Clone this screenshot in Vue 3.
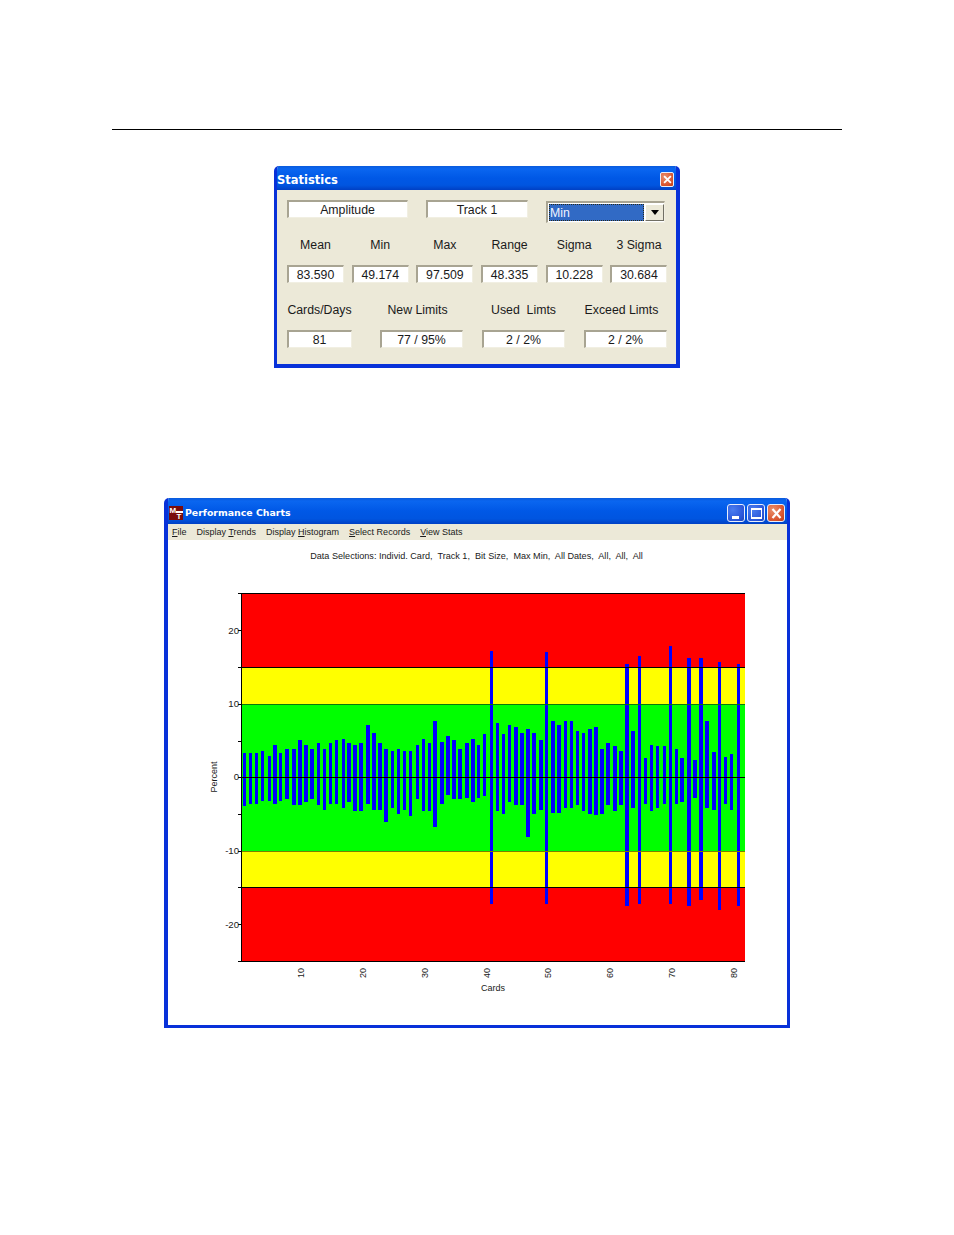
<script setup>
const row2 = [
  { label: 'Mean', value: '83.590' },
  { label: 'Min', value: '49.174' },
  { label: 'Max', value: '97.509' },
  { label: 'Range', value: '48.335' },
  { label: 'Sigma', value: '10.228' },
  { label: '3 Sigma', value: '30.684' },
]
const row3 = [
  { label: 'Cards/Days', value: '81', shift: false },
  { label: 'New Limits', value: '77 / 95%', shift: true },
  { label: 'Used  Limts', value: '2 / 2%', shift: false },
  { label: 'Exceed Limts', value: '2 / 2%', shift: true },
]
const menus = [
  { key: 'F', rest: 'ile' },
  { pre: 'Display ', key: 'T', rest: 'rends' },
  { pre: 'Display ', key: 'H', rest: 'istogram' },
  { key: 'S', rest: 'elect Records' },
  { key: 'V', rest: 'iew Stats' },
]

// Measured bar extents: [left, right, top, bottom]
const partA = [
  [128,138,160,318],[147,156,160,312],[165,174,160,312],[183,192,154,303],[203,213,168,303],
  [220,231,136,312],[238,248,160,303],[255,267,148,297],[276,288,148,315],[294,305,120,315],
  [312,323,136,306],[330,341,148,297],[351,360,130,315],[369,378,148,330],[387,396,130,312],
  [405,414,120,312],[426,435,118,324],[442,453,130,306],[460,471,136,333],[478,489,130,333],
  [498,510,75,312],[516,528,100,330],[534,546,130,330],[552,563,148,365],[573,582,154,324],
  [591,600,148,342],[609,618,154,330],[627,636,154,347],[648,657,136,297],[666,675,118,333],
  [684,693,130,333],[700,711,64,381],[720,732,127,312],[738,750,109,285],[756,768,120,297],
  [774,786,148,297],[795,806,130,294],[813,824,118,306],[831,840,136,294],
]
const partB = [
  [9,18,282,48],[30,39,33,372],[48,57,249,93],[66,75,282,102],[84,93,255,66],
  [102,114,261,75],[120,132,279,75],[138,150,267,171],[156,168,279,102],[177,189,300,90],
  [195,205,36,372],[213,225,243,99],[231,243,255,99],[252,261,243,84],[270,279,243,84],
  [288,297,273,75],[306,315,279,93],[324,336,267,102],[342,354,261,106],[360,372,327,102],
  [379,390,309,75],[399,411,318,93],[417,429,333,75],[435,447,72,378],[453,465,273,84],
  [474,483,48,372],[491,501,354,72],[510,519,315,93],[528,537,318,84],[549,558,318,72],
  [567,576,18,372],[585,594,327,72],[601,612,354,66],[621,633,54,378],[639,651,360,54],
  [657,669,54,360],[675,687,243,84],[696,708,336,90],[714,724,66,390],[732,741,351,72],
  [750,759,342,90],[771,780,72,378],
]
const toBar = (x0, t0, b0) => ([l, r, t, b]) => {
  const x = Math.round(x0 + l / 3)
  const y = Math.round(t0 + t / 3)
  return { x, y, w: Math.max(3, Math.round((r - l) / 3)), h: Math.round(b0 + b / 3) - y }
}
const bars = [...partA.map(toBar(200, 700, 700)), ...partB.map(toBar(480, 640, 780))]

const bands = [
  { y: 593, h: 74, fill: '#ff0000' },
  { y: 667, h: 37, fill: '#ffff00' },
  { y: 704, h: 147, fill: '#00ff00' },
  { y: 851, h: 36, fill: '#ffff00' },
  { y: 887, h: 74, fill: '#ff0000' },
]
const ticks = [593, 630, 667, 704, 741, 777, 814, 851, 887, 924, 961]
const yLabels = [
  { y: 631, t: '20' }, { y: 704, t: '10' }, { y: 777, t: '0' },
  { y: 851, t: '-10' }, { y: 925, t: '-20' },
]
const xLabels = [
  { x: 300, t: '10' }, { x: 362, t: '20' }, { x: 424, t: '30' }, { x: 486, t: '40' },
  { x: 547, t: '50' }, { x: 609, t: '60' }, { x: 671, t: '70' }, { x: 733, t: '80' },
]
const dataTitle = 'Data Selections: Individ. Card,  Track 1,  Bit Size,  Max Min,  All Dates,  All,  All,  All'
</script>

<template>
  <div class="page">
    <div class="rule"></div>

    <section class="win stats">
      <header class="titlebar stats-bar">
        <span class="stats-title">Statistics</span>
        <span class="cap close small">
          <svg viewBox="0 0 13 13" width="11" height="11"><path d="M2.5 2.5l8 8M10.5 2.5l-8 8" stroke="#fff" stroke-width="2.2" fill="none" /></svg>
        </span>
      </header>
      <div class="stats-body">
        <div class="top-row">
          <div class="field amp">Amplitude</div>
          <div class="field track">Track 1</div>
          <div class="combo">
            <div class="combo-sel"><span>Min</span></div>
            <div class="combo-btn"><i class="arrow"></i></div>
          </div>
        </div>
        <div class="six">
          <div v-for="c in row2" :key="c.label" class="lbl">{{ c.label }}</div>
          <div v-for="c in row2" :key="c.value" class="field">{{ c.value }}</div>
        </div>
        <div class="four">
          <div v-for="c in row3" :key="c.label" class="lbl" :class="{ shift: c.shift }">{{ c.label }}</div>
          <div v-for="c in row3" :key="c.label + 'v'" class="field">{{ c.value }}</div>
        </div>
      </div>
    </section>

    <section class="win perf">
      <header class="titlebar perf-bar">
        <svg class="appicon" viewBox="0 0 14 14" width="14" height="14">
          <rect width="14" height="14" fill="#7a0c0c" />
          <rect x="7" y="5" width="7" height="2" fill="#fff" />
          <text x="0.5" y="7" class="ic-m">M</text>
          <text x="7.5" y="13" class="ic-t">T</text>
        </svg>
        <span class="perf-title">Performance Charts</span>
        <span class="caps">
          <span class="cap blue">
            <svg viewBox="0 0 17 17" width="17" height="17"><rect x="4" y="11" width="7" height="3" fill="#fff" /></svg>
          </span>
          <span class="cap blue">
            <svg viewBox="0 0 17 17" width="17" height="17"><rect x="3.5" y="4" width="10" height="9" fill="none" stroke="#fff" stroke-width="1.2" /><rect x="3" y="3" width="11" height="2" fill="#fff" /></svg>
          </span>
          <span class="cap close">
            <svg viewBox="0 0 17 17" width="17" height="17"><path d="M4.5 4l8 9M12.5 4l-8 9" stroke="#fff" stroke-width="2.2" fill="none" /></svg>
          </span>
        </span>
      </header>
      <nav class="menubar">
        <span v-for="m in menus" :key="m.rest" class="menu">{{ m.pre }}<u>{{ m.key }}</u>{{ m.rest }}</span>
      </nav>
      <svg class="chart" viewBox="168 540 619 485" width="619" height="485">
        <text x="476.5" y="559" text-anchor="middle" class="t title-t">{{ dataTitle }}</text>
        <rect v-for="b in bands" :key="b.y" x="241" :y="b.y" width="504" :height="b.h" :fill="b.fill" />
        <rect v-for="(b, i) in bars" :key="i" :x="b.x" :y="b.y" :width="b.w" :height="b.h" fill="#0000ff" />
        <rect x="241" y="667" width="504" height="1" fill="#000" />
        <rect x="241" y="704" width="504" height="1" fill="#0a7a0a" />
        <rect x="241" y="777" width="504" height="1" fill="#000" />
        <rect x="241" y="851" width="504" height="1" fill="#7a8000" />
        <rect x="241" y="887" width="504" height="1" fill="#000" />
        <rect x="238" y="593" width="507" height="1" fill="#000" />
        <rect x="238" y="961" width="507" height="1" fill="#000" />
        <rect x="241" y="593" width="1" height="369" fill="#000" />
        <rect v-for="y in ticks" :key="y" x="238" :y="y" width="3" height="1" fill="#000" />
        <text v-for="l in yLabels" :key="l.t" x="239" :y="l.y + 3" text-anchor="end" class="t num">{{ l.t }}</text>
        <text v-for="l in xLabels" :key="l.t" class="t" text-anchor="middle" :transform="`translate(${l.x + 3.5} 973) rotate(-90)`">{{ l.t }}</text>
        <text x="493" y="991" text-anchor="middle" class="t">Cards</text>
        <text class="t" text-anchor="middle" transform="translate(217 777) rotate(-90)">Percent</text>
      </svg>
    </section>
  </div>
</template>

<style scoped>
.page {
  min-height: 1235px;
  padding-top: 129px;
  box-sizing: border-box;
  font-family: "Liberation Sans", Arial, sans-serif;
  background: #fff;
  overflow: hidden;
}
.rule {
  width: 730px;
  height: 1px;
  margin: 0 auto;
  background: #000;
}
.win {
  box-sizing: border-box;
  margin-left: auto;
  margin-right: auto;
  border-radius: 5px 5px 0 0;
  overflow: hidden;
  display: flex;
  flex-direction: column;
}
.stats {
  width: 406px;
  height: 202px;
  margin-top: 36px;
  border: solid #0831d9;
  border-width: 0 4px 4px 3px;
  background: #ece9d8;
}
.perf {
  width: 626px;
  height: 530px;
  margin-top: 130px;
  border: solid #0831d9;
  border-width: 0 3px 3px 4px;
  background: #fff;
}
.titlebar {
  display: flex;
  align-items: center;
  background: linear-gradient(180deg, #0a5bdc 0%, #0a66f0 12%, #0058e6 50%, #0055e0 80%, #0040c4 100%);
  color: #fff;
  font-family: "DejaVu Sans", sans-serif;
  font-weight: 700;
  flex: none;
}
.stats-bar {
  height: 24px;
  padding-right: 3px;
  justify-content: space-between;
  margin-right: -1px;
}
.stats-title {
  font-size: 11.5px;
  line-height: 24px;
  margin-top: 3px;
}
.perf-bar {
  height: 26px;
  margin-left: -4px;
  margin-right: -3px;
  padding-left: 5px;
  padding-right: 5px;
}
.appicon { flex: none; margin-top: 3px; overflow: visible; }
.ic-m { font: 700 8px "Liberation Sans", sans-serif; fill: #fff; }
.ic-t { font: 700 8px "Liberation Sans", sans-serif; fill: #fff; }
.perf-title {
  font-size: 9.4px;
  margin-left: 2px;
  margin-top: 3px;
}
.caps {
  margin-left: auto;
  display: flex;
  gap: 2px;
  margin-top: 4px;
}
.cap {
  box-sizing: border-box;
  width: 18px;
  height: 18px;
  border: 1px solid #e8eefc;
  border-radius: 3px;
  display: flex;
  align-items: center;
  justify-content: center;
}
.cap svg { display: block; flex: none; }
.cap.blue { background: radial-gradient(circle at 30% 30%, #4a7df0, #2a55d8 70%, #1f44b8); }
.cap.close { background: radial-gradient(circle at 30% 30%, #e8906c, #dc5a34 60%, #c03c14); }
.cap.small { width: 14px; height: 15px; border-radius: 2px; margin-top: 2px; }
.stats-body {
  flex: 1;
  padding: 10px 0 0 10px;
  display: flex;
  flex-direction: column;
}
.top-row {
  display: flex;
  align-items: flex-start;
  height: 35px;
}
.field {
  box-sizing: border-box;
  height: 18px;
  padding-right: 1px;
  background: #fff;
  border: solid #f1efe2;
  border-width: 0 1px 1px 0;
  border-top: 2px solid #a8a492;
  border-left: 2px solid #a8a492;
  color: #1a1a1a;
  font-size: 12.3px;
  line-height: 16px;
  text-align: center;
  white-space: pre;
}
.amp { width: 121px; }
.track { width: 102px; margin-left: 18px; }
.combo {
  box-sizing: border-box;
  width: 119px;
  height: 22px;
  margin-left: 18px;
  margin-top: 1px;
  background: #fff;
  border: solid #f1efe2;
  border-width: 0 1px 1px 0;
  border-top: 2px solid #a8a492;
  border-left: 2px solid #a8a492;
  display: flex;
  padding: 1px 0 1px 1px;
}
.combo-sel {
  width: 95px;
  background: #316ac5;
  outline: 1px dotted #2a2a1a;
  outline-offset: -1px;
  color: #f0f4ff;
  font-size: 12.3px;
  line-height: 19px;
  padding-left: 1px;
  box-sizing: border-box;
}
.combo-btn {
  width: 19px;
  margin-left: 1px;
  box-sizing: border-box;
  background: #ece9d8;
  border: 1px solid;
  border-color: #fff #716f64 #716f64 #fff;
  display: flex;
  align-items: center;
  justify-content: center;
}
.arrow {
  display: block;
  width: 0;
  height: 0;
  border-left: 4px solid transparent;
  border-right: 4px solid transparent;
  border-top: 5px solid #000;
}
.six {
  display: grid;
  grid-template-columns: repeat(6, 57px);
  column-gap: 7.7px;
  row-gap: 12px;
}
.six .lbl { line-height: 20px; }
.four {
  display: grid;
  grid-template-columns: 65px 92px 83px 83px;
  column-gap: 19px;
  row-gap: 11px;
  margin-top: 18px;
}
.four > :nth-child(4n + 2) { margin-left: 9px; }
.lbl {
  height: 18px;
  line-height: 18px;
  font-size: 12.3px;
  color: #1a1a1a;
  text-align: center;
  white-space: pre;
}
.four .lbl.shift { padding-right: 8px; }
.menubar {
  height: 16px;
  flex: none;
  background: #ece9d8;
  display: flex;
  align-items: center;
  gap: 10px;
  padding-left: 4px;
}
.menu {
  font-size: 9px;
  color: #1a1a1a;
  white-space: pre;
}
.chart { display: block; flex: none; }
.t {
  font: 9px "Liberation Sans", Arial, sans-serif;
  fill: #1a1a1a;
  white-space: pre;
}
.title-t { font-size: 9.1px; }
.num { font-size: 9.6px; }
rect { shape-rendering: crispEdges; }
</style>
